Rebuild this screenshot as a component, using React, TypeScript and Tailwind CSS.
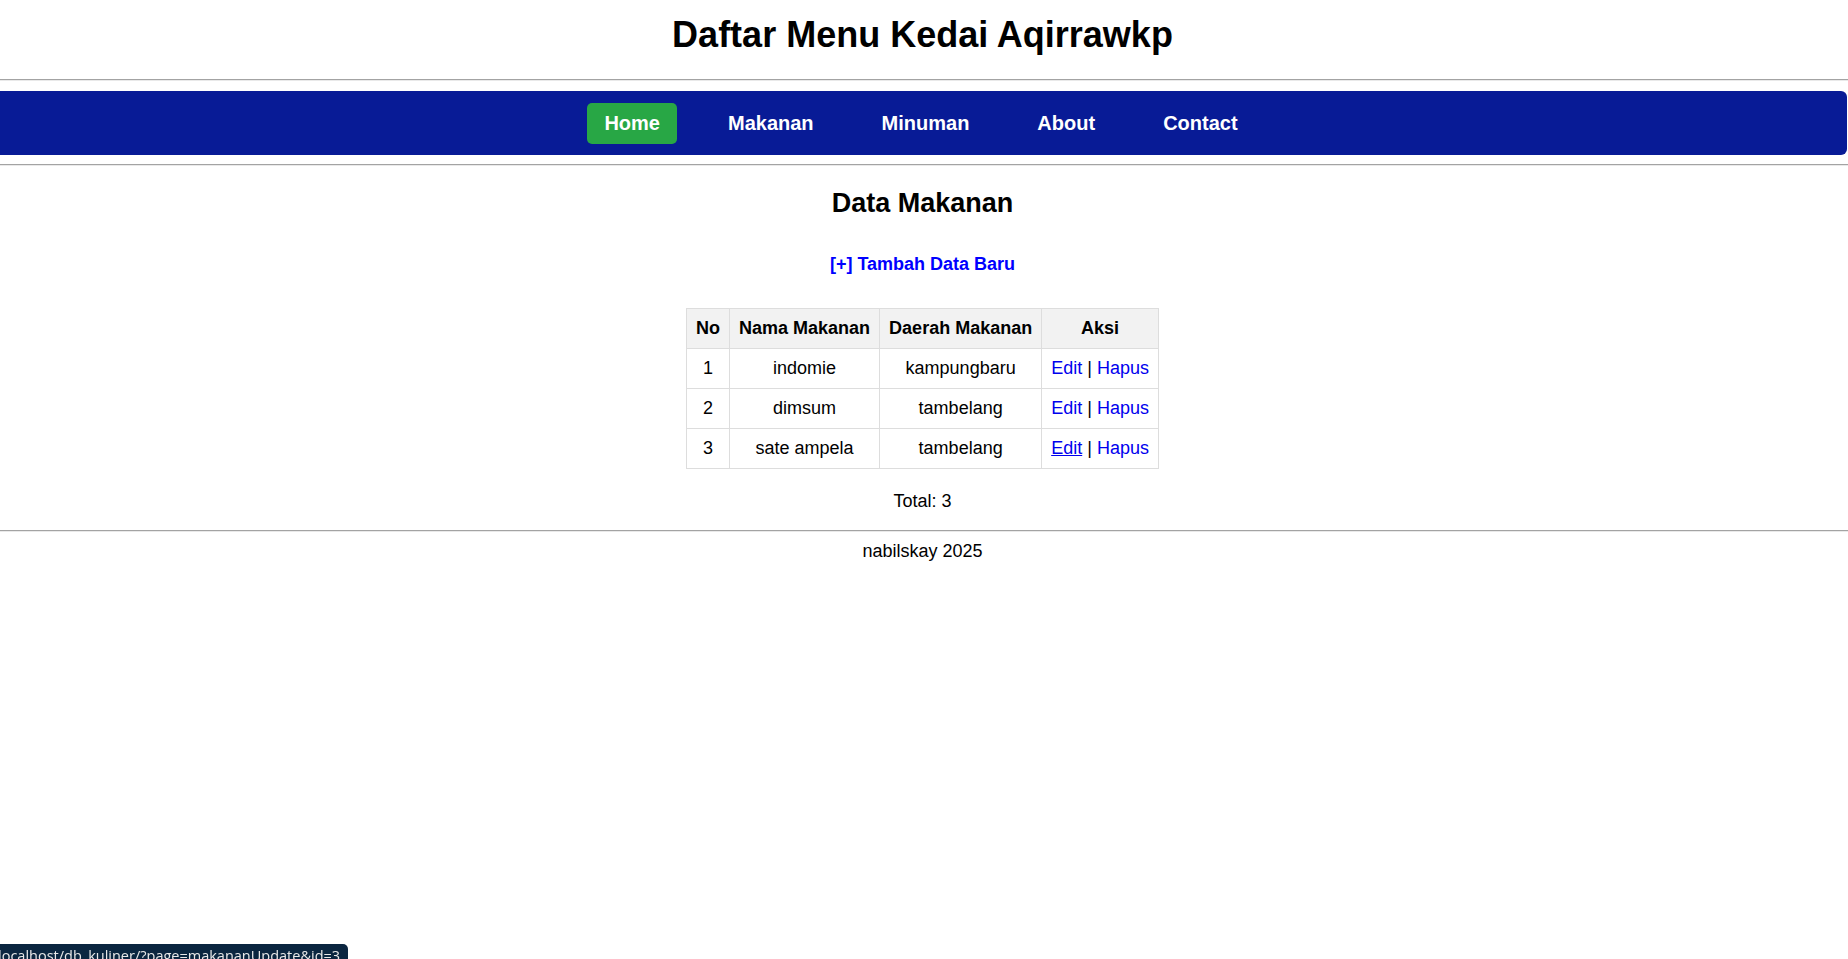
import React from 'react';

const navItems = ['Home', 'Makanan', 'Minuman', 'About', 'Contact'];

const makanan = [
  { no: 1, nama: 'indomie', daerah: 'kampungbaru' },
  { no: 2, nama: 'dimsum', daerah: 'tambelang' },
  { no: 3, nama: 'sate ampela', daerah: 'tambelang' },
];

export default function App() {
  return (
    <div className="min-h-[959px] bg-white text-black font-['Liberation_Sans',Arial,sans-serif]">
      <header className="pt-[14px] pr-[3px]">
        <h1 className="text-center text-[36px] font-bold leading-[41px]">Daftar Menu Kedai Aqirrawkp</h1>
      </header>

      <div className="mt-[24px] border-t border-b border-t-[#a3a3a3] border-b-[#e9e9e9]" />

      <nav className="mt-[10px] mr-[1px] flex h-[64px] items-center justify-center gap-[34px] rounded-r-[6px] bg-[#081b96] pr-[5px]">
        {navItems.map((item) => (
          <a
            key={item}
            href="#"
            className={
              'rounded-[5px] px-[17px] py-[9px] text-[20px] font-bold leading-[23px] text-white ' +
              (item === 'Home' ? 'bg-[#28a745]' : '')
            }
          >
            {item}
          </a>
        ))}
      </nav>

      <div className="mt-[9px] border-t border-b border-t-[#a3a3a3] border-b-[#e9e9e9]" />

      <main className="flex flex-col items-center pr-[3px]">
        <h2 className="mt-[22px] text-[27px] font-bold leading-[31px]">Data Makanan</h2>

        <a href="#" className="mt-[35px] text-[18px] font-bold leading-[21px] text-[#0000ff]">
          [+] Tambah Data Baru
        </a>

        <table className="mt-[33px] border-collapse text-center text-[18px] leading-[21px]">
          <thead>
            <tr className="bg-[#f2f2f2]">
              <th className="border border-[#dddddd] px-[9px] py-[9px] font-bold">No</th>
              <th className="border border-[#dddddd] px-[9px] py-[9px] font-bold">Nama Makanan</th>
              <th className="border border-[#dddddd] px-[9px] py-[9px] font-bold">Daerah Makanan</th>
              <th className="border border-[#dddddd] px-[9px] py-[9px] font-bold">Aksi</th>
            </tr>
          </thead>
          <tbody>
            {makanan.map((row) => (
              <tr key={row.no}>
                <td className="border border-[#dddddd] px-[9px] py-[9px]">{row.no}</td>
                <td className="border border-[#dddddd] px-[9px] py-[9px]">{row.nama}</td>
                <td className="border border-[#dddddd] px-[9px] py-[9px]">{row.daerah}</td>
                <td className="border border-[#dddddd] px-[9px] py-[9px]">
                  <a href="#" className={'text-[#0000ee] ' + (row.no === 3 ? 'underline' : '')}>
                    Edit
                  </a>{' '}
                  |{' '}
                  <a href="#" className="text-[#0000ee]">
                    Hapus
                  </a>
                </td>
              </tr>
            ))}
          </tbody>
        </table>

        <p className="mt-[22px] text-[18px] leading-[21px]">Total: 3</p>
      </main>

      <div className="mt-[18px] border-t border-b border-t-[#a3a3a3] border-b-[#e9e9e9]" />

      <footer className="mt-[9px] pr-[3px] text-center text-[18px] leading-[21px]">nabilskay 2025</footer>

      {/* browser status bubble */}
      <div className="fixed left-0 top-[944px] h-[15px] w-[348px] overflow-hidden rounded-tr-[5px] bg-[#0b2640]">
        <span className="ml-[-2px] block whitespace-nowrap pt-[2px] font-['Open_Sans',sans-serif] text-[14.5px] leading-[20px] text-[#e8e8e8]">
          localhost/db_kuliner/?page=makananUpdate&amp;id=3
        </span>
      </div>
    </div>
  );
}
